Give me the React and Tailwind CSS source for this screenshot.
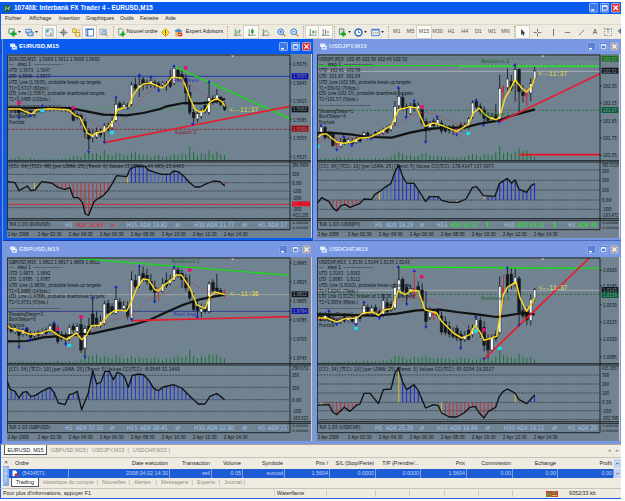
import React from 'react';
import clsx from 'clsx';

const STEP = 11.64;
const barX = (i) => 22 + i * STEP;

const DATES = ['2 Apr 2008', '2 Apr 02:30', '2 Apr 04:30', '2 Apr 06:30', '2 Apr 08:30', '2 Apr 10:30', '2 Apr 12:30', '2 Apr 14:30'];

// candle strings: high top bottom low kind (w = up, b = down, r = red)
const CHARTS = {
  EURUSD: {
    info: [
      ['EURUSD,M15  1.5609 1.5611 1.5600 1.5602', 272],
      ['---   step 1  -------------------', 162],
      ['UTD  1.5673   1.5647', 124],
      ['LTD  1.5546   1.5577', 124],
      ['UTD_Line (1.5635), probable break-up targets:', 278],
      ['T1=1.5717 (82pts.)', 119],
      ['LTD_Line (1.5587), probable downbreak targets:', 290],
      ['T1=1.5485 (102pts.)', 124],
      ['--------------------------------', 155],
      ['ShowingSteps=1', 103],
      ['BackSteps=0', 80],
      ['Fractals', 47],
    ],
    candles: '215 219 225 228 b,212 218 226 232 w,214 219 227 235 b,210 220 232 248 b,218 222 230 236 b,220 226 234 242 w,224 230 240 246 b,214 220 238 242 w,212 218 226 232 w,214 219 224 230 b,213 218 224 229 w,212 217 224 230 b,213 218 223 228 w,214 219 224 228 b,214 218 224 230 w,214 219 225 231 b,214 219 226 234 b,216 222 256 260 b,230 237 248 256 b,235 240 252 272 b,250 260 290 310 b,280 288 312 345 b,286 298 308 322 w,278 290 306 312 w,280 290 300 308 b,264 272 292 322 w,262 274 284 292 b,246 256 278 284 w,188 208 256 262 w,198 206 216 222 b,200 208 216 224 w,204 212 218 222 b,140 150 208 214 w,128 148 160 168 b,122 150 160 186 w,126 134 150 166 b,134 142 148 162 b,126 138 148 158 w,134 142 152 160 b,138 146 158 166 b,138 144 150 158 w,138 146 152 168 b,104 132 154 160 b,94 100 144 150 w,98 106 130 138 b,104 118 132 140 b,118 130 174 210 b,150 172 232 240 b,222 232 248 268 b,228 236 252 262 w,218 226 244 252 w,200 212 228 236 b,138 188 232 240 w,180 190 200 210 b,162 180 200 206 w,182 186 208 214 b,200 210 224 228 b',
    volume: [6, 4, 5, 12, 4, 3, 8, 5, 3, 3, 2, 3, 4, 3, 5, 6, 8, 14, 12, 10, 24, 28, 18, 22, 16, 30, 18, 14, 24, 22, 16, 14, 22, 26, 18, 16, 18, 12, 14, 16, 10, 12, 14, 18, 16, 20, 18, 42, 26, 16, 22, 18, 30, 20, 26, 18, 16],
    ma: '22,222 60,222 75,229 95,237 110,224 150,221 205,224 225,241 240,247 262,294 275,302 290,294 310,289 325,277 340,259 352,224 370,219 385,217 400,179 415,159 430,147 450,144 465,149 485,159 500,149 515,127 545,129 555,149 570,189 585,224 600,231 615,227 630,201 650,191 665,199 675,214',
    slow: '22,218 210,219 260,229 310,239 380,241 430,234 480,222 500,214 550,204 600,205 650,199 675,192',
    dashed: '22,224 200,224 250,241 290,271 320,281 350,279 380,244 410,209 440,174 480,152 530,134 570,149 600,169 630,189 675,205',
    levels: [
      { y: 124, color: '#2238b0', w: 3 },
      { y: 221, color: '#3f9a55', w: 2.5, dash: '16 6 5 6' },
      { y: 283, color: '#7a2530', w: 2.5, dash: '8 4' },
    ],
    trends: [
      { p: [522, 94, 870, 251], color: '#14e014', w: 4 },
      { p: [313, 323, 870, 214], color: '#e81c2c', w: 5 },
    ],
    labels: [
      { x: 525, y: 297, t: 'Support 1', color: '#8a1020', len: 64 },
      { x: 520, y: 141, t: 'Pivot level', color: '#1a22c8', len: 76 },
    ],
    timer: ['<--11:37', 688, 231],
    marks: [
      ['m', 57, 204], ['m', 220, 218], ['m', 557, 99], ['c', 127, 227], ['c', 336, 293],
      ['d', 57, 249], ['d', 92, 243], ['u', 127, 211], ['d', 266, 351], ['u', 348, 186], ['d', 383, 221], ['u', 418, 119],
      ['u', 453, 125], ['d', 476, 168], ['u', 522, 92], ['d', 578, 268], ['u', 627, 140], ['d', 313, 323],
    ],
    axis: [['1.5675', 87], ['1.5645', 143], ['1.5615', 198], ['1.5585', 254], ['1.5555', 309], ['1.5525', 365]],
    boxes: [['1.5655', 124, '#0a10b0'], ['1.5602', 223, '#15181c'], ['1.5569', 281, '#9c0810']],
    zero: 443,
    grid: [392, 418, 443, 468, 492, 518],
    cci: '22,440 45,443 57,467 82,453 92,467 105,465 125,440 155,444 175,458 195,463 210,458 220,487 235,488 247,502 256,537 266,541 282,500 295,490 310,482 325,465 337,445 350,422 380,425 390,402 410,393 435,394 445,405 465,412 485,418 510,418 520,408 535,410 550,422 570,444 585,456 600,456 615,448 640,438 660,440 674,453',
    bars: [[100, 105, '#d8b840'], [140, 335, '#c03038'], [380, 385, '#d8b840'], [390, 445, '#1c28d8'], [446, 490, '#3c64c8'], [491, 565, '#1c28d8'], [670, 676, '#c03038']],
    cciText: '[CCI: 34] [TCCI: 48] [per LSMA: 25] [Trend: 6] Values CCI|TCCI: -44.493|-23.9463',
    cciLine: 508,
    cciAxis: [['284.3409', 391], ['100', 417], ['0.00', 444], ['-100', 468], ['-200', 490], ['-300', 522], ['-422.235', 541]],
    adx: [['24.69', '#e81824', '⇲'], ['19.82', '#9ccaf8', '⇄'], ['21.77', '#9ccaf8', '⇄'], ['17', '#9ccaf8', '']],
  },
  USDJPY: {
    info: [
      ['USDJPY,M15  102.45 102.56 102.45 102.52', 265],
      ['---   step 1  -------------------', 162],
      ['UTD  102.61  102.58', 124],
      ['LTD  101.93  102.04', 124],
      ['UTD_Line (102.58), probable break-up targets:', 278],
      ['T1=109.62 (704pts.)', 119],
      ['LTD_Line (102.13), probable downbreak targets:', 285],
      ['T1=101.57 (56pts.)', 117],
      ['--------------------------------', 155],
      ['ShowingSteps=1', 103],
      ['BackSteps=4', 80],
      ['Fractals', 47],
    ],
    candles: '296 302 312 320 b,272 276 294 300 w,272 278 308 312 b,288 294 306 314 b,292 298 332 336 b,312 320 332 345 r,310 320 334 338 w,304 312 322 330 b,308 314 322 328 w,310 318 326 334 b,306 312 322 326 w,302 308 318 324 b,290 294 306 312 w,290 294 306 314 b,296 302 308 314 w,288 292 302 308 b,284 290 298 304 w,278 284 294 300 w,272 280 292 296 b,266 270 284 290 w,198 214 262 272 w,158 184 212 222 w,176 188 218 226 b,206 214 222 246 b,204 212 236 240 w,196 206 220 230 b,202 212 222 230 w,214 224 262 270 b,250 260 288 320 b,258 264 278 290 w,250 258 272 280 b,244 254 266 274 w,256 264 288 296 b,268 274 288 294 b,270 276 286 296 b,268 276 286 300 b,270 280 288 298 r,262 270 282 290 b,262 270 280 284 w,246 252 278 284 w,196 204 246 252 w,190 198 216 222 b,205 214 230 238 b,215 225 250 262 b,232 244 256 264 b,234 246 254 262 w,206 240 256 262 b,120 160 256 262 w,150 156 170 190 r,100 132 158 166 w,120 140 162 168 b,86 104 136 200 w,100 104 170 235 b,150 172 182 202 b,160 174 184 214 r,130 146 174 198 w,96 108 130 136 w',
    volume: [6, 5, 7, 4, 6, 10, 8, 5, 6, 5, 4, 6, 5, 4, 3, 6, 5, 6, 8, 12, 18, 26, 20, 14, 16, 12, 14, 20, 22, 16, 12, 14, 12, 10, 8, 9, 8, 10, 10, 14, 20, 16, 12, 18, 16, 14, 24, 42, 22, 24, 20, 26, 36, 28, 30, 16, 10],
    ma: '22,309 35,297 50,297 65,309 80,321 100,325 125,321 150,309 180,307 200,297 245,271 265,224 300,215 320,219 345,274 370,264 395,271 440,289 465,274 475,269 490,234 507,219 525,239 540,249 560,254 570,244 585,189 600,164 615,134 635,159 650,171 665,154 675,127',
    slow: '22,294 60,293 120,298 180,306 245,308 300,293 350,283 400,278 465,277 510,266 560,258 620,238 675,223',
    dashed: '22,322 60,310 130,308 220,300 260,270 300,244 340,232 380,238 430,262 470,275 560,255 620,195 660,180',
    levels: [
      { y: 71, color: '#1c7a28', w: 2.5, dash: '3 6' },
      { y: 92, color: '#18d818', w: 3, to: 448 },
      { y: 94, color: '#1cf01c', w: 6, dash: '8 3', from: 448 },
      { y: 109, color: '#b4bcc4', w: 2.5 },
      { y: 226, color: '#2c7040', w: 2.5, dash: '8 4' },
    ],
    trends: [
      { p: [568, 261, 870, 116], color: '#e81c2c', w: 5 },
      { p: [627, 359, 870, 359], color: '#f01020', w: 5 },
    ],
    labels: [
      { x: 513, y: 84, t: 'Resistance 2', color: '#0c6418', len: 84 },
      { x: 513, y: 242, t: 'Resistance 1', color: '#0c6418', len: 84 },
    ],
    timer: ['<--11:37', 685, 123],
    marks: [
      ['m', 336, 216], ['c', 23, 334], ['c', 475, 295], ['u', 33, 270], ['d', 80, 345], ['u', 101, 304], ['d', 125, 332],
      ['d', 183, 312], ['u', 265, 157], ['d', 288, 248], ['u', 312, 196], ['d', 347, 322], ['u', 381, 244], ['d', 440, 300],
      ['u', 497, 197], ['d', 520, 272], ['d', 568, 262], ['u', 614, 90],
    ],
    axis: [['102.35', 153], ['102.15', 204], ['101.95', 257], ['101.75', 309], ['101.55', 361]],
    boxes: [['102.67', 71, '#18721c'], ['102.52', 107, '#15181c'], ['102.07', 225, '#086038']],
    zero: 495,
    grid: [405, 436, 465, 495, 523],
    cci: '22,505 35,488 57,500 68,518 80,528 92,513 105,508 120,517 150,505 162,492 185,493 195,478 208,470 225,457 243,445 255,410 266,390 278,425 290,444 312,445 325,465 347,500 358,485 385,485 395,496 420,502 445,502 468,492 487,458 500,455 520,482 555,484 568,446 592,430 605,445 615,434 627,463 650,472 662,453 674,446',
    bars: [[50, 155, '#c03038'], [206, 212, '#d8b840'], [215, 250, '#3c64c8'], [251, 330, '#1c28d8'], [355, 388, '#1c28d8'], [435, 445, '#d8b840'], [520, 526, '#d8b840'], [530, 676, '#1c28d8']],
    cciText: '[CCI: 34] [TCCI: 16] [per LSMA: 25] [Trend: 5] Values CCI|TCCI: 178.4147 137.9973',
    cciAxis: [['383.5318', 390], ['300', 407], ['200', 436], ['100', 466], ['0.00', 495], ['-100', 521], ['-193.471', 541]],
    adx: [['18.29', '#9ccaf8', '⇄'], ['31.53', '#18f018', '⬆'], ['43.12', '#18f018', '⬆'], ['40', '#18f018', '']],
  },
  GBPUSD: {
    info: [
      ['GBPUSD,M15  1.9812 1.9817 1.9809 1.9812', 272],
      ['---   step 1  -------------------', 162],
      ['UTD  1.9873   1.9842', 124],
      ['LTD  1.9785   1.9787', 124],
      ['UTD_Line (1.9839), probable break-up targets:', 278],
      ['T1=1.9980 (143pts.)', 123],
      ['LTD_Line (1.9788), probable downbreak targets:', 290],
      ['T1=1.9731 (57pts.)', 117],
      ['--------------------------------', 155],
      ['ShowingSteps=1', 103],
      ['BackSteps=0', 80],
      ['Fractals', 47],
    ],
    candles: '255 262 272 280 b,262 268 280 286 b,262 270 282 288 w,268 276 292 326 b,270 276 288 296 w,268 272 286 294 b,278 286 298 306 b,280 286 294 300 w,276 282 292 298 b,272 280 290 296 w,268 276 286 292 b,256 264 280 286 w,252 258 284 292 b,262 280 310 318 b,280 290 302 308 b,284 294 304 318 b,260 268 304 310 w,256 264 276 284 b,256 266 280 286 w,232 260 336 345 b,262 272 330 355 w,240 264 284 290 b,178 228 262 270 b,220 240 260 268 b,232 250 262 270 w,188 198 256 262 w,186 196 226 234 b,196 206 224 230 b,150 185 226 230 w,180 192 212 220 b,188 202 212 218 w,190 206 236 244 b,100 126 240 246 w,110 128 146 156 b,88 112 145 150 w,86 106 126 132 b,92 112 130 140 b,108 130 155 160 b,128 148 164 192 b,148 156 162 190 r,120 138 160 164 w,104 128 144 150 b,110 124 136 142 w,84 94 126 130 w,86 96 112 120 b,94 106 124 150 b,108 120 150 160 b,110 160 180 188 b,164 190 214 220 b,188 206 218 236 b,196 212 222 238 w,200 210 220 226 b,130 138 220 226 w,124 134 158 168 b,108 150 162 168 b,150 158 168 174 b,154 164 172 180 r',
    volume: [5, 4, 4, 6, 5, 3, 4, 5, 3, 4, 3, 4, 5, 8, 4, 5, 6, 4, 5, 12, 18, 22, 24, 26, 16, 22, 18, 14, 24, 18, 14, 16, 22, 16, 18, 14, 16, 14, 18, 14, 10, 16, 12, 18, 22, 18, 20, 42, 22, 16, 22, 18, 26, 22, 26, 18, 14],
    ma: '22,262 30,270 60,278 90,289 120,286 150,275 175,292 200,304 230,285 245,305 260,290 275,263 300,262 325,230 345,217 380,219 395,190 410,150 430,123 445,125 465,155 475,158 495,140 515,125 530,110 545,112 570,150 590,200 615,212 630,175 645,162 676,170',
    slow: '22,310 80,309 130,298 200,293 280,286 330,275 400,260 450,245 500,222 550,200 600,184 640,176 676,170',
    dashed: '22,272 100,290 240,295 300,270 340,245 400,230 440,185 500,165 570,130 600,150 640,165 676,165',
    levels: [
      { y: 170, color: '#a8aca8', w: 2.5 },
      { y: 220, color: '#1c2890', w: 3, dash: '6 2' },
    ],
    trends: [
      { p: [240, 62, 870, 112], color: '#14e014', w: 4 },
      { p: [395, 248, 870, 236], color: '#e81c2c', w: 5 },
    ],
    labels: [
      { x: 515, y: 76, t: 'Resistance 1', color: '#0c6418', len: 84 },
      { x: 520, y: 234, t: 'Pivot level', color: '#1a22c8', len: 74 },
    ],
    timer: ['<--11:36', 690, 174],
    marks: [
      ['m', 173, 272], ['m', 243, 237], ['m', 569, 96], ['c', 208, 322], ['d', 57, 329], ['u', 80, 270], ['d', 92, 307],
      ['u', 162, 253], ['d', 197, 320], ['d', 255, 358], ['u', 278, 180], ['u', 348, 146], ['d', 395, 246], ['u', 418, 84],
      ['d', 464, 192], ['u', 522, 86], ['d', 592, 238],
    ],
    axis: [['1.9845', 75], ['1.9825', 132], ['1.9805', 189], ['1.9785', 246], ['1.9765', 303], ['1.9745', 360]],
    boxes: [['1.9812', 169, '#15181c'], ['1.9794', 219, '#1418a8']],
    zero: 485,
    grid: [412, 448, 485, 520],
    cci: '22,430 30,453 45,460 57,480 68,463 80,461 92,475 105,473 125,460 150,448 163,465 175,495 195,500 208,470 220,467 232,460 245,515 265,465 278,398 290,438 303,432 315,400 328,400 340,425 352,403 365,408 375,420 385,448 397,412 415,408 430,410 445,425 462,452 475,458 490,447 520,440 545,450 570,475 595,498 615,498 630,475 650,467 662,475 674,486',
    bars: [[20, 165, '#2438c8'], [205, 235, '#2438c8'], [262, 575, '#1c34d0'], [628, 665, '#3c64c8']],
    cciText: '[CCI: 34] [TCCI: 10] [per LSMA: 25] [Trend: 5] Values CCI|TCCI: -8.0545 32.1440',
    cciAxis: [['258.6152', 390], ['200', 412], ['100', 449], ['0.00', 485], ['-100', 520], ['-163.521', 541]],
    adx: [['37.55', '#9ccaf8', '⇄'], ['28.45', '#9ccaf8', '⇄'], ['22.80', '#9ccaf8', '⇄'], ['21', '#9ccaf8', '']],
  },
  USDCHF: {
    info: [
      ['USDCHF,M15  1.0136 1.0144 1.0135 1.0143', 272],
      ['---   step 1  -------------------', 162],
      ['UTD  1.0163   1.0162', 124],
      ['LTD  1.0083   1.0112', 124],
      ['UTD_Line (1.0162), probable break-up targets:', 278],
      ['T1=1.0241 (79pts.)', 117],
      ['LTD_Line (1.0125) broken at 1.0138, dn-targets:', 290],
      ['T1=1.0059 (80pts.)', 117],
      ['--------------------------------', 155],
      ['ShowingSteps=1', 103],
      ['BackSteps=0', 80],
      ['Fractals', 47],
    ],
    candles: '222 232 242 248 b,230 236 246 250 b,222 230 244 250 w,216 232 246 252 b,230 240 252 258 b,240 248 256 260 b,236 244 252 258 w,226 236 248 254 b,232 238 248 254 w,228 236 250 256 b,226 232 258 262 w,226 234 242 250 b,192 204 232 236 w,200 208 226 232 b,202 210 222 230 w,200 208 222 232 b,212 220 236 242 b,168 188 232 238 w,180 194 222 228 b,188 198 216 222 b,136 148 210 216 w,84 126 156 182 w,118 124 160 176 b,140 148 168 198 b,142 152 162 168 w,98 150 174 184 r,130 145 158 166 b,136 156 188 200 b,158 210 250 270 b,206 222 238 246 w,214 222 232 248 r,210 218 232 238 b,220 234 282 290 b,236 250 284 292 b,250 265 288 298 b,268 284 296 302 b,262 272 300 310 b,278 288 306 330 b,280 292 304 312 w,262 276 304 308 b,260 270 290 298 w,232 245 264 270 w,236 248 286 300 b,250 268 322 340 b,290 302 336 362 b,290 298 336 340 w,278 290 302 310 b,115 145 284 290 w,110 150 165 200 r,90 110 150 166 b,88 108 140 154 b,92 118 140 148 w,114 122 224 262 b,200 218 234 242 b,206 218 246 262 b,170 184 248 262 w,150 155 180 190 w',
    volume: [3, 3, 4, 5, 4, 3, 3, 4, 5, 4, 6, 4, 8, 8, 5, 6, 7, 10, 8, 12, 22, 20, 18, 12, 14, 20, 18, 20, 22, 18, 14, 16, 16, 14, 16, 10, 12, 18, 16, 14, 10, 12, 14, 18, 16, 12, 20, 42, 24, 20, 18, 14, 28, 20, 16, 20, 12],
    ma: '22,240 50,240 80,252 105,242 140,240 160,225 190,222 205,232 225,215 245,212 265,158 285,170 305,158 325,158 345,215 380,225 395,250 430,285 455,300 480,290 495,262 512,285 522,307 545,300 560,295 570,235 580,170 592,148 618,132 630,180 650,220 674,180',
    slow: '22,229 200,233 260,227 320,217 390,215 440,222 500,229 560,237 590,233 640,225 674,229',
    dashed: '22,245 120,240 220,215 290,180 340,180 400,200 440,235 480,275 540,290 580,285 620,240 674,190',
    levels: [
      { y: 157, color: '#b0b4b4', w: 2.5 },
      { y: 169, color: '#2c7040', w: 2.5, dash: '8 4' },
    ],
    trends: [
      { p: [265, 87, 870, 91], color: '#14e014', w: 4 },
      { p: [522, 363, 838, 60], color: '#e81c2c', w: 5 },
    ],
    labels: [{ x: 513, y: 185, t: 'Resistance 1', color: '#0c6418', len: 86 }],
    timer: ['<--11:37', 686, 157],
    marks: [
      ['m', 335, 116], ['m', 522, 276], ['c', 138, 271], ['c', 497, 279], ['c', 569, 331], ['u', 57, 218], ['d', 80, 260],
      ['d', 138, 260], ['u', 162, 192], ['d', 208, 242], ['u', 265, 86], ['d', 290, 200], ['u', 313, 98], ['d', 348, 268],
      ['d', 452, 332], ['u', 497, 236], ['d', 522, 363], ['u', 592, 88], ['d', 627, 262],
    ],
    axis: [['1.0160', 97], ['1.0145', 143], ['1.0130', 200], ['1.0115', 252], ['1.0100', 304], ['1.0085', 357]],
    boxes: [['1.0143', 156, '#15181c'], ['1.0139', 171, '#086038']],
    zero: 493,
    grid: [411, 438, 465, 493, 518, 545],
    cci: '22,502 57,500 68,522 80,530 103,508 120,520 140,502 150,498 162,466 180,466 205,497 220,455 243,453 255,405 265,390 278,432 290,455 312,440 325,458 347,510 370,500 385,503 395,525 418,537 440,537 462,525 480,508 495,505 508,525 522,540 535,520 557,508 568,475 580,460 592,453 615,465 627,485 650,497 674,471',
    bars: [[20, 40, '#d8b840'], [45, 150, '#c03038'], [260, 270, '#e0c020'], [275, 340, '#1c28d8'], [390, 398, '#d8b840'], [400, 562, '#c03038'], [613, 620, '#d8b840'], [660, 676, '#1c28d8']],
    cciText: '[CCI: 34] [TCCI: 16] [per LSMA: 25] [Trend: 5] Values CCI|TCCI: 95.0294 19.2017',
    cciAxis: [['415.3957', 390], ['300', 412], ['200', 438], ['100', 465], ['0.00', 493], ['-100', 519], ['-202.598', 541]],
    adx: [['25.39', '#9ccaf8', '⇄'], ['19.84', '#9ccaf8', '⇄'], ['18.11', '#9ccaf8', '⇄'], ['20', '#9ccaf8', '']],
  },
};

const parse = (s) => s.split(' ').map((p) => p.split(',').map(Number));

const valueAt = (pts, x) => {
  const j = pts.findIndex((p) => p[0] >= x);
  if (j <= 0) return pts[j === 0 ? 0 : pts.length - 1][1];
  const [x0, y0] = pts[j - 1];
  const [x1, y1] = pts[j];
  return y0 + ((y1 - y0) * (x - x0)) / (x1 - x0);
};

const Txt = ({ x, y, len, fill = '#0c1014', size = 16, className, children }) => (
  <text x={x} y={y} fill={fill} fontSize={size} textLength={len} lengthAdjust="spacingAndGlyphs" xmlSpace="preserve" className={className}>
    {children}
  </text>
);

const Mark = ({ kind, x, y }) => {
  if (kind === 'm') return <circle cx={x} cy={y} r="6" fill="#e81070" />;
  if (kind === 'c') return <rect x={x - 5.5} y={y - 5} width="11" height="10" rx="2" fill="#18e0f0" />;
  const d = kind === 'u' ? `M${x - 5} ${y + 4}L${x} ${y - 5}L${x + 5} ${y + 4}Z` : `M${x - 5} ${y - 4}L${x} ${y + 5}L${x + 5} ${y - 4}Z`;
  return <path d={d} fill="#1820d8" />;
};

const Chart = ({ symbol, width }) => {
  const c = CHARTS[symbol];
  const cci = parse(c.cci);
  const candles = c.candles.split(',').map((s) => s.split(' '));
  const adxX = [195, 380, 582, 775];
  const names = ['H5', 'H15', 'H30', 'H1'];

  return (
    <svg width={width} height="184" viewBox={`21 57 ${width * 3} 552`} className="block shrink-0 bg-[#718290] font-['DejaVu_Sans_Condensed','DejaVu_Sans',sans-serif]">
      {/* price panel */}
      {c.levels.map((l, i) => (
        <line key={i} x1={l.from || 22} x2={l.to || 870} y1={l.y} y2={l.y} stroke={l.color} strokeWidth={l.w} strokeDasharray={l.dash} />
      ))}
      {c.volume.map((v, i) => (
        <line key={i} x1={barX(i)} x2={barX(i)} y1={376} y2={376 - v} stroke="#14782c" strokeWidth="3" />
      ))}
      {candles.map(([h, t, b, l, k], i) => {
        const color = k === 'r' ? '#c82838' : '#14181c';
        return (
          <g key={i}>
            <line x1={barX(i)} x2={barX(i)} y1={h} y2={l} stroke={color} strokeWidth="2.6" />
            <rect x={barX(i) - 4} y={t} width={k === 'r' ? 4 : 8} height={b - t} fill={k === 'w' ? '#f4f6f8' : color} stroke={color} strokeWidth="1.5" />
          </g>
        );
      })}
      {c.info.map(([t, len], i) => (
        <Txt key={i} x={27} y={77 + i * 17.3} len={len}>{t}</Txt>
      ))}
      <polyline points={c.dashed} fill="none" stroke="#b04450" strokeWidth="2.4" strokeDasharray="6 5" />
      <polyline points={c.slow} fill="none" stroke="#101214" strokeWidth="6.5" strokeLinejoin="round" />
      <polyline points={c.ma} fill="none" stroke="#f8d820" strokeWidth="4.5" strokeLinejoin="round" />
      {c.trends.map((t, i) => (
        <line key={i} x1={t.p[0]} y1={t.p[1]} x2={t.p[2]} y2={t.p[3]} stroke={t.color} strokeWidth={t.w} />
      ))}
      {c.marks.map(([k, x, y], i) => <Mark key={i} kind={k} x={x} y={y} />)}
      {c.labels.map((l, i) => <Txt key={i} x={l.x} y={l.y} len={l.len} fill={l.color} size={15}>{l.t}</Txt>)}
      <Txt x={c.timer[1]} y={c.timer[2]} len={86} fill="#f0e040" size={20} className="font-['Liberation_Mono',monospace]">{c.timer[0]}</Txt>
      <path d="M692 60h12l-6 7z" fill="#d8d8d8" />

      {/* CCI panel */}
      {c.grid.map((y) => <line key={y} x1="22" x2="870" y1={y} y2={y} stroke="#2c343c" strokeWidth="2.2" strokeDasharray="6 3" />)}
      {candles.map((_, i) => {
        const x = barX(i);
        const range = c.bars.find(([a, b]) => x >= a && x <= b);
        return range && <line key={i} x1={x} x2={x} y1={c.zero} y2={valueAt(cci, x)} stroke={range[2]} strokeWidth="3" />;
      })}
      {c.cciLine && <line x1="22" x2="870" y1={c.cciLine} y2={c.cciLine} stroke="#d02838" strokeWidth="3" />}
      <polyline points={c.cci} fill="none" stroke="#101214" strokeWidth="4" strokeLinejoin="round" />
      <Txt x={27} y={400} len={symbol === 'GBPUSD' ? 512 : 525}>{c.cciText}</Txt>

      {/* trend strip */}
      <Txt x={27} y={574} len={124}>{`ToR 1.03 (${symbol})`}</Txt>
      {c.adx.map(([v, color, sign], i) => (
        <g key={i}>
          <Txt x={adxX[i]} y={575} fill="#a4c4e8" size={19} len={[22, 33, 33, 22][i]}>{names[i]}</Txt>
          <Txt x={adxX[i] + [32, 40, 38, 28][i]} y={575} fill={color} size={19} len={i === 3 ? 58 : 83}>{`ADX ${v}`}</Txt>
          {sign && <Txt x={adxX[i] + [134, 146, 145][i]} y={575} fill={color} size={19}>{sign}</Txt>}
        </g>
      ))}
      {DATES.map((d, i) => <Txt key={d} x={i ? 20 + i * 93 : 23} y={603} len={i ? 72 : 63}>{d}</Txt>)}

      {/* price scale */}
      <path d="M22 60V584M22 60H870V584M22 377H933M22 381H933M22 551H933M22 556H933M22 584H870" fill="none" stroke="#14181c" strokeWidth="2.6" />
      {c.axis.map(([t, y]) => (
        <g key={t}>
          <line x1="870" x2="875" y1={y} y2={y} stroke="#14181c" strokeWidth="2.5" />
          <Txt x={879} y={y + 6} len={41}>{t}</Txt>
        </g>
      ))}
      {c.boxes.map(([t, y, fill]) => (
        <g key={t}>
          <rect x="875" y={y - 9} width="50" height="18" fill={fill} />
          <Txt x={879} y={y + 6} len={41} fill="#8a98a4">{t}</Txt>
        </g>
      ))}
      {c.cciLine && <rect x="876" y="499" width="54" height="15" fill="#e8182c" />}
      {c.cciLine && <Txt x={890} y={511} len={36} size={13} fill="#a01020">-262.3</Txt>}
      {c.cciAxis.map(([t, y]) => (
        <Txt key={t} x={876} y={y + 6} len={t.length > 6 ? 49 : t.length * 7}>{t}</Txt>
      ))}
      <Txt x={877} y={568} len={48} size={11}>0.00000</Txt>
      <Txt x={877} y={582} len={48} size={11}>0.00000</Txt>
    </svg>
  );
};

const WinButton = ({ kind, active, main }) => (
  <svg viewBox="0 0 9 9" className={clsx(main ? 'size-[9.5px]' : 'size-[9px]')}>
    <rect x=".4" y=".4" width="8.2" height="8.2" rx="1.2" fill={kind === 'close' ? (active ? '#e03038' : '#a8a4a8') : active ? '#3c78e8' : '#5c80d8'} stroke={active ? '#c8dcf8' : '#a0b8ec'} strokeWidth=".7" />
    {kind === 'min' && <path d="M2 6.7h3" stroke="#fff" strokeWidth="1.4" />}
    {kind === 'max' && <path d="M2.2 2.6h4.6v4.2H2.2zM2.2 3.1h4.6" fill="none" stroke="#fff" strokeWidth=".9" />}
    {kind === 'close' && <path d="M2.4 2.4l4.2 4.2M6.6 2.4L2.4 6.6" stroke="#fff" strokeWidth="1.2" />}
  </svg>
);

const ChartWindow = ({ symbol, width, active, className, titleClass }) => (
  <section className={clsx('flex flex-col overflow-hidden', active ? 'bg-[#0a5cf0]' : 'bg-[#7898e4]', className)}>
    <header className={clsx('flex shrink-0 items-center justify-between pr-[2px]', titleClass)}>
      <div className="flex items-center gap-[2px] pl-[3px]">
        <svg viewBox="0 0 8 8" className="size-[7px]">
          <path d="M.5 1h5v3h-5zM2.5 3.5h5v3.5h-5z" fill="#dce8fc" stroke="#fff" strokeWidth=".7" />
          <path d="M3.4 5.4h3" stroke="#2c5cc0" strokeWidth=".8" />
        </svg>
        <span className={clsx("font-['Liberation_Sans',sans-serif] text-[6.2px] leading-none font-bold", active ? 'text-white' : 'text-[#dce4f8]')}>{symbol},M15</span>
      </div>
      <div className="flex gap-[2.5px]">
        <WinButton kind="min" active={active} />
        <WinButton kind="max" active={active} />
        <WinButton kind="close" active={active} />
      </div>
    </header>
    <div className="flex">
      <Chart symbol={symbol} width={width} />
      <div className="w-px bg-[#d4d0c8]" />
    </div>
  </section>
);

const MENU = [['Fichier', 'w-[24px]'], ['Affichage', 'w-[30px]'], ['Insertion', 'w-[27px]'], ['Graphiques', 'w-[34px]'], ['Outils', 'w-[20px]'], ['Fenetre', 'w-[25px]'], ['Aide', 'w-[20px]']];

const Slot = ({ w, pressed, children }) => (
  <div className={clsx('flex h-[12px] shrink-0 items-center justify-center', w, pressed && 'bg-[#fbfaf6] outline outline-[#d4d0c4]')}>{children}</div>
);

const Ico = ({ children, className = 'size-[9px]' }) => (
  <svg viewBox="0 0 10 10" fill="none" className={className}>{children}</svg>
);

const Caret = () => (
  <svg viewBox="0 0 4 3" className="ml-px h-[2px] w-[3px]"><path d="M0 0h4L2 3z" fill="#222" /></svg>
);

const Sep = ({ w }) => (
  <div className={clsx('flex h-[12px] shrink-0 justify-center', w)}><i className="w-px border-l border-dotted border-[#b0ac9c]" /></div>
);

const Axes = ({ children }) => (
  <Ico>
    <path d="M2.5 1v8M1 8h8.5" stroke="#68786c" strokeWidth=".9" />
    {children}
  </Ico>
);

const Lens = ({ minus }) => (
  <Ico>
    <path d="M6 6l3.2 3.2" stroke="#d0a030" strokeWidth="1.8" />
    <circle cx="4.2" cy="4.2" r="3.2" fill="#d8ecfc" stroke="#3878d0" strokeWidth="1.1" />
    <path d={minus ? 'M2.6 4.2h3.2' : 'M2.6 4.2h3.2M4.2 2.6v3.2'} stroke="#2860c0" strokeWidth=".9" />
  </Ico>
);

const Toolbar = () => (
  <div className="flex h-[15px] items-center overflow-hidden border-t border-[#dcd8cc] pl-[5px] font-['Liberation_Sans',sans-serif] text-[5.4px] leading-none text-[#222]">
    <Slot w="w-[17px]">
      <Ico><path d="M1 1h6v5H1z" fill="#e8f4e8" stroke="#5c8c70" /><path d="M6 3.5v6M3 6.5h6.5" stroke="#18a828" strokeWidth="2.4" /></Ico><Caret />
    </Slot>
    <Slot w="w-[17px]">
      <Ico><path d="M1 1.5h6v4H1z" fill="#dce8fc" stroke="#4478c8" /><path d="M3 4.5h6v4H3z" fill="#b8d0f4" stroke="#4478c8" /></Ico><Caret />
    </Slot>
    <Slot w="w-[3px]" />
    <Slot w="w-[13px]" pressed>
      <Ico><path d="M1 1h8v8H1z" fill="#e4f0fc" stroke="#78a0c8" /><path d="M3 5V2.5M1.8 3.6L3 2.2l1.2 1.4" stroke="#18982c" /><path d="M6.5 5v3M5.3 6.8l1.2 1.4 1.2-1.4" stroke="#c89020" /></Ico>
    </Slot>
    <Slot w="w-[14px]"><Ico><circle cx="5" cy="5" r="2.4" stroke="#687078" /><path d="M5 .5v9M.5 5h9" stroke="#687078" strokeWidth=".9" /></Ico></Slot>
    <Slot w="w-[13px]"><Ico><path d="M.8 1h3.4l.8 1.2V5H.8z" fill="#f8e468" stroke="#c09c28" /><path d="M4 5h4.6v4H4z" fill="#fcf0a0" stroke="#c09c28" /><path d="M7 1l.6 1.4 1.6.2-1.2 1" stroke="#d8a818" /></Ico></Slot>
    <Slot w="w-[13px]" pressed><Ico><path d="M1 1h8.5v8H1z" fill="#fff" stroke="#4078c8" /><path d="M1 1.7h8.5M3 2v7" stroke="#4078c8" strokeWidth="1.3" /></Ico></Slot>
    <Slot w="w-[15px]"><Ico><path d="M1 1.5h7v6H1z" fill="#e0e4ec" stroke="#98a4b8" /><circle cx="5.5" cy="5" r="2" fill="#cce0f8" stroke="#5888c8" /><path d="M7 6.5l2.5 2.6" stroke="#c8a050" strokeWidth="1.4" /></Ico></Slot>
    <Sep w="w-[5px]" />
    <Slot w="w-[10px]"><Ico><path d="M2 .8h3.5L7 2.4V8H2z" fill="#f4f8f4" stroke="#78907c" /><path d="M6.5 4v5.5M3.8 6.8h5.4" stroke="#18a828" strokeWidth="2.2" /></Ico></Slot>
    <Slot w="w-[32px]"><span className="whitespace-nowrap">Nouvel ordre</span></Slot>
    <Slot w="w-[14px]"><Ico><path d="M5 .6L9.4 5 5 9.4.6 5z" fill="#fcdc30" stroke="#c89818" /><path d="M5 2.8v3M5 6.6v1" stroke="#604808" strokeWidth="1.1" /></Ico></Slot>
    <Slot w="w-[13px]"><Ico><path d="M1 3.4L5 1l4 2.4-4 1.8z" fill="#5090e0" stroke="#3068b0" strokeWidth=".6" /><path d="M2 4.8h4v4H2z" fill="#f0c860" stroke="#b88830" strokeWidth=".6" /><rect x="4.8" y="5" width="4.4" height="4.2" rx="1" fill="#d83028" /><path d="M6 7.1h2" stroke="#fff" /></Ico></Slot>
    <Slot w="w-[39px]"><span className="whitespace-nowrap">Expert Advisors</span></Slot>
    <Sep w="w-[7px]" />
    <Slot w="w-[13px]"><Axes><path d="M4.5 3v3.5M7 2v4M7 3h1.5" stroke="#289838" /></Axes></Slot>
    <Slot w="w-[14px]" pressed><Axes><path d="M6 .8v6.2" stroke="#18882c" /><path d="M4.6 2h2.8v3.6H4.6z" fill="#20b038" /></Axes></Slot>
    <Slot w="w-[14px]"><Axes><path d="M3 6c1-4 3-4 3.5-2.5L9 6" stroke="#48a058" /></Axes></Slot>
    <Slot w="w-[2px]" />
    <Slot w="w-[14px]"><Lens /></Slot>
    <Slot w="w-[13px]"><Lens minus /></Slot>
    <Sep w="w-[5px]" />
    <Slot w="w-[13px]" pressed><Axes><path d="M5 2.5l3 2-3 2z" fill="#209838" /><path d="M9 2v5" stroke="#68786c" strokeWidth=".7" /></Axes></Slot>
    <Slot w="w-[13px]" pressed><Axes><path d="M5 2v5M9 4.5H6.2" stroke="#5c6c88" /></Axes></Slot>
    <Sep w="w-[4px]" />
    <Slot w="w-[16px]"><Ico><path d="M1.5 1h5v6h-5z" fill="#d4e0d8" stroke="#607c68" /><path d="M6 4v5.5M3.2 6.8h5.6" stroke="#18a828" strokeWidth="2.4" /></Ico><Caret /></Slot>
    <Slot w="w-[17px]"><Ico><circle cx="5" cy="5" r="3.9" fill="#f4faff" stroke="#2868c8" strokeWidth="1.6" /><path d="M5 2.6V5h1.8" stroke="#284880" strokeWidth=".8" /></Ico><Caret /></Slot>
    <Slot w="w-[17px]"><Ico><path d="M.8 1.5h8.4v7H.8z" fill="#e8f0fc" stroke="#4078c8" /><path d="M1 2h8" stroke="#4078c8" strokeWidth="1.4" /><path d="M2 6.5l2-1.6 2 1L8 4.5" stroke="#c88838" strokeWidth=".9" /></Ico><Caret /></Slot>
    <Sep w="w-[4px]" />
    {['M1', 'M5', 'M15', 'M30', 'H1', 'H4', 'D1', 'W1', 'MN'].map((t) => (
      <Slot key={t} w="w-[13.6px]" pressed={t === 'M15'}><span className="text-[#555]">{t}</span></Slot>
    ))}
    <Sep w="w-[4px]" />
    <Slot w="w-[13px]" pressed><Ico><path d="M3.4 1v7l1.6-1.5L6.2 9l1-.5L6 6.2h2.3z" fill="#333c48" /></Ico></Slot>
    <Slot w="w-[16px]"><Ico><path d="M5 .8v3.4M5 5.8v3.4M.8 5h3.4M5.8 5h3.4" stroke="#667" /></Ico></Slot>
    <Slot w="w-[16px]"><Ico><path d="M5 1v8" stroke="#667" /></Ico></Slot>
    <Slot w="w-[13px]"><Ico><path d="M2 5h6" stroke="#778" /></Ico></Slot>
    <Slot w="w-[14px]"><Ico><path d="M2 8l6-6" stroke="#778" /></Ico></Slot>
    <Slot w="w-[13px]"><span className="text-[6.5px] text-[#444]">A</span></Slot>
    <Slot w="w-[13px]"><span className="border border-dotted border-[#999] px-px text-[5.5px] text-[#666]">T</span></Slot>
    <Slot w="w-[11px]"><Ico><path d="M3 3.4h5M5.5 1l2.8 2.4L5.5 6z" fill="#567" stroke="#567" /></Ico></Slot>
  </div>
);

const COLS = [
  ['Ordre', 'w-[60px]', '(5434571', 'text-left'],
  ['Date exécution', 'w-[101px]', '2008.04.02 14:30'],
  ['Transaction', 'w-[42px]', 'sell'],
  ['Volume', 'w-[31px]', '0.05'],
  ['Symbole', 'w-[42px]', 'eurusd'],
  ['Prix   /', 'w-[45px]', '1.5604'],
  ['S/L (Stop/Perte)', 'w-[46px]', '0.0000'],
  ['T/P (Prendre/...', 'w-[45px]', '0.0000'],
  ['Prix', 'w-[46px]', '1.5604'],
  ['Commission', 'w-[46px]', '0.00'],
  ['Echange', 'w-[45px]', '0.00'],
  ['Profit', 'w-[56px]', '0.00'],
];

const Terminal = () => (
  <div className="flex h-[31px] border-t border-[#c8c4b8]">
    <div className="flex w-[8px] shrink-0 flex-col items-center pl-[2px]">
      <span className="text-[6px] leading-[8px]">×</span>
      <div className="flex h-[20px] w-[6px] items-center justify-center bg-[#88aae8]">
        <span className="rotate-180 text-[4.5px] leading-none text-[#dce8fc] [writing-mode:vertical-rl]">Terminal</span>
      </div>
    </div>
    <div className="min-w-0 flex-1">
      <div className="flex h-[11px] items-center">
        {COLS.map(([name, w, , align], i) => (
          <div key={i} className={clsx('shrink-0 whitespace-nowrap pr-[2px]', w, align ? 'pl-[6px]' : 'text-right')}>{name}</div>
        ))}
        <span className="flex h-[9px] w-[7px] items-center justify-center bg-[#c4d4f8]">
          <svg viewBox="0 0 6 4" className="h-[3px] w-[5px]"><path d="M1 3l2-2 2 2" fill="none" stroke="#345" /></svg>
        </span>
      </div>
      <div className="flex h-[9px] items-center bg-[#1c5cd4] text-[#c4d4f4]">
        {COLS.map(([, w, value, align], i) => (
          <div key={i} className={clsx('flex h-[9px] shrink-0 items-center border-r border-[#7ca0e4] pr-[1px]', w, align ? 'gap-[4px] pl-[3px]' : 'justify-end')}>
            {align && <svg viewBox="0 0 6 7" className="h-[7px] w-[6px]"><path d="M.5.5h3l1.5 1.5V6H.5z" fill="#fff" /><circle cx="4.2" cy="5" r="1.7" fill="#d82828" /></svg>}
            {value}
          </div>
        ))}
        <span className="flex h-[9px] w-[7px] items-center justify-center bg-[#c4d4f8]">
          <svg viewBox="0 0 6 4" className="h-[3px] w-[5px]"><path d="M1 1l2 2 2-2" fill="none" stroke="#345" /></svg>
        </span>
      </div>
      <div className="flex h-[10px] items-start pl-[2px] leading-[9px] text-[#928e82]">
        <span className="h-[9px] w-[28px] border border-t-0 border-[#555] bg-white text-center text-[#222]">Trading</span>
        {[['Historique du compte', 'w-[59px]'], ['Nouvelles', 'w-[32px]'], ['Alertes', 'w-[27px]'], ['Messagerie', 'w-[36px]'], ['Experts', 'w-[27px]'], ['Journal', 'w-[25px]']].map(([t, w]) => (
          <span key={t} className={clsx('flex justify-between pl-[4px] whitespace-nowrap', w)}><span>{t}</span><span>|</span></span>
        ))}
      </div>
    </div>
  </div>
);

export default function App() {
  return (
    <div className="h-[501px] w-[625px] overflow-hidden bg-white pt-[2px]">
      <div className="flex h-[497px] w-[621px] flex-col overflow-hidden border-b border-[#1c60e0] bg-[#efebe1] font-['Liberation_Sans',sans-serif] text-[5.4px] leading-none text-[#26262a]">
        <header className="flex h-[12px] shrink-0 items-center justify-between bg-[#0a5cf0] pr-px pl-[4px]">
          <div className="flex items-center gap-[3px]">
            <svg viewBox="0 0 8 8" className="size-[7px]">
              <path d="M0 0h8v8H0z" fill="#205c50" />
              <path d="M1 6l2-3 2 2 2-4M2 1v5M5.5 2v4" stroke="#a0e8a0" strokeWidth=".8" fill="none" />
            </svg>
            <span className="text-[6.3px] font-bold tracking-[.08px] whitespace-nowrap text-white">107408: Interbank FX Trader 4 - EURUSD,M15</span>
          </div>
          <div className="flex gap-[1.5px]">
            <WinButton kind="min" active main />
            <WinButton kind="max" active main />
            <WinButton kind="close" active main />
          </div>
        </header>

        <nav className="flex h-[10px] shrink-0 items-center border-l border-[#1c60e0] pl-[4px]">
          {MENU.map(([t, w]) => <span key={t} className={w}>{t}</span>)}
        </nav>
        <div className="shrink-0 border-l border-[#1c60e0]"><Toolbar /></div>

        <main className="flex h-[405px] shrink-0 border-l-2 border-[#1450d8] bg-[#8496c0] pl-px">
          <div className="flex w-[310px] flex-col">
            <ChartWindow symbol="EURUSD" width={304} active className="h-[202px] border-b border-[#1038a8] pl-[4px]" titleClass="h-[15px]" />
            <ChartWindow symbol="GBPUSD" width={304} className="h-[203px] pl-[4px]" titleClass="h-[16px]" />
          </div>
          <div className="ml-px flex w-[307px] flex-col">
            <ChartWindow symbol="USDJPY" width={302} className="h-[202px] border-b border-[#4868b8] pl-[3px]" titleClass="h-[15px]" />
            <ChartWindow symbol="USDCHF" width={302} className="h-[203px] pl-[3px]" titleClass="h-[16px]" />
          </div>
        </main>

        <div className="flex h-[13px] shrink-0 items-start border-t border-[#aaa69c] border-l border-l-[#1c60e0] pl-[3px] leading-[10px] text-[#928e82]">
          <span className="h-[10px] w-[43px] border border-t-0 border-[#555] bg-white text-center text-[#222]">EURUSD, M15</span>
          {['GBPUSD,M15', 'USDJPY,M15', 'USDCHF,M15'].map((t) => (
            <span key={t} className="flex w-[41px] justify-between pl-[4px]"><span>{t}</span><span>|</span></span>
          ))}
          <span className="ml-auto flex gap-[5px] pr-[2px]"><span>◂</span><span>▸</span></span>
        </div>

        <div className="shrink-0 border-l border-[#1c60e0]"><Terminal /></div>

        <footer className="flex flex-1 items-center border-t border-[#c8c4b8] border-l border-l-[#1c60e0] pl-[2px] whitespace-nowrap">
          <span className="w-[271px]">Pour plus d'informations, appuyer F1</span>
          <span className="h-[7px] w-[52px] border-l border-[#d0ccc0] pl-[2px] leading-[7px]">Waterflame</span>
          {['w-[49px]', 'w-[34px]', 'w-[35px]', 'w-[34px]', 'w-[34px]', 'w-[34px]'].map((w, i) => (
            <span key={i} className={clsx('h-[7px] border-l border-[#d0ccc0]', w)} />
          ))}
          <svg viewBox="0 0 12 6" className="h-[6px] w-[12px]">
            <path d="M0 0h12v6H0z" fill="#c84038" />
            <path d="M1 6V2M3 6V1M5 6V2.5M7 3V0M9 3V0" stroke="#58a838" strokeWidth="1.2" />
            <path d="M6 4.5h5" stroke="#e8b848" />
          </svg>
          <span className="ml-[11px]">9352/33 kb</span>
        </footer>
      </div>
    </div>
  );
}
